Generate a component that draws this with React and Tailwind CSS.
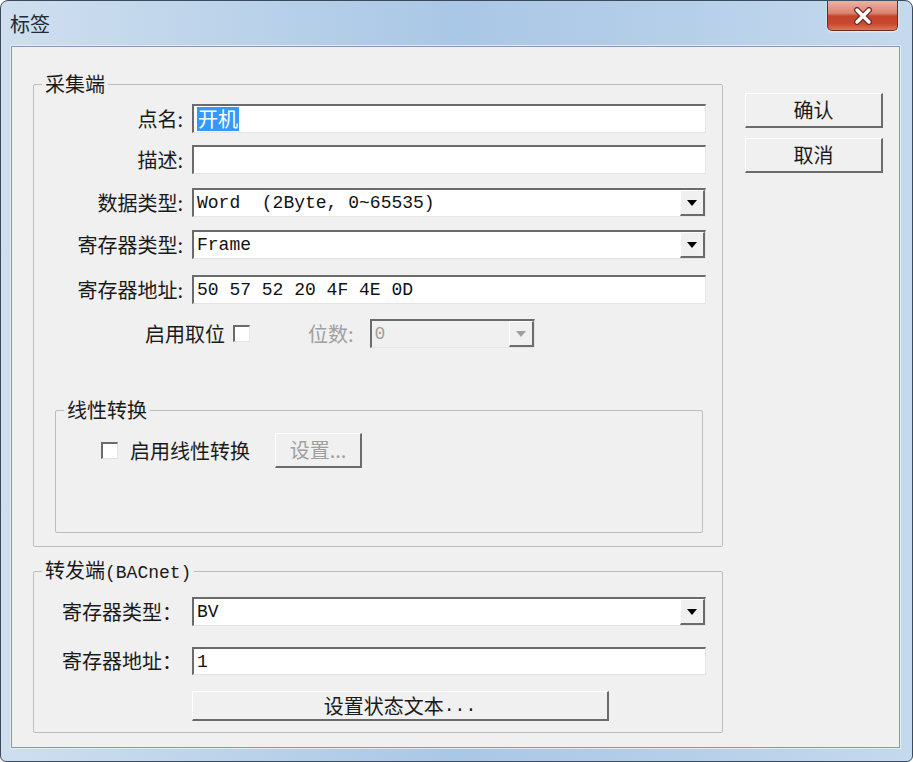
import React from 'react'

const CJK = "font-['Noto_Sans_CJK_SC',sans-serif]"
const MONO = "font-['Liberation_Mono','Noto_Sans_CJK_SC',monospace]"

// classic Win32 3D edges
const sunken = 'border-t-2 border-l-2 border-t-[#6b6b6b] border-l-[#6b6b6b] border-r border-b border-r-[#e4e4e4] border-b-[#e4e4e4]'
const raised = 'border-t border-l border-t-white border-l-white border-r-2 border-b-2 border-r-[#6b6b6b] border-b-[#6b6b6b]'

function Arrow({ disabled }) {
  return (
    <div className={`h-full w-[25px] bg-[#f0f0f0] flex items-center justify-center ${raised}`}>
      <svg width="10" height="6" viewBox="0 0 10 6">
        <path d="M0 0H10L5 6Z" fill={disabled ? '#a0a0a0' : '#000'} />
      </svg>
    </div>
  )
}

function Field({ children, combo, disabled, width = 'w-[514px]' }) {
  return (
    <div className={`h-full flex items-stretch ${disabled ? 'bg-[#f0f0f0]' : 'bg-white'} ${sunken} ${width}`}>
      <div className={`flex-1 flex items-center pl-[3px] text-[18px] leading-none ${MONO} ${disabled ? 'text-[#a0a0a0]' : 'text-[#111]'}`}>
        {children}
      </div>
      {combo && <Arrow disabled={disabled} />}
    </div>
  )
}

function Check() {
  return <div className={`w-[17px] h-[17px] bg-white ${sunken}`} />
}

function Group({ title, className, children }) {
  return (
    <fieldset className={`border border-[#bdbdbd] rounded-[2px] ${className}`}>
      <legend className={`ml-[8px] px-[3px] text-[20px] leading-[22px] text-[#1a1a1a] ${CJK}`}>{title}</legend>
      {children}
    </fieldset>
  )
}

function Row({ label, mt = '', children }) {
  return (
    <div className={`flex items-center h-[29px] ${mt}`}>
      <div className={`w-[149px] text-right text-[20px] leading-none text-[#1a1a1a] ${CJK}`}>{label}</div>
      <div className="ml-[9px] h-full">{children}</div>
    </div>
  )
}

function Btn({ children, className = '', disabled }) {
  return (
    <div className={`flex items-center justify-center bg-[#f0f0f0] text-[20px] leading-none ${CJK} ${raised} ${disabled ? 'text-[#a0a0a0]' : 'text-[#1a1a1a]'} ${className}`}>
      {children}
    </div>
  )
}

function CloseButton() {
  return (
    <div className="mr-[14px] w-[71px] h-[30px] rounded-b-[5px] border border-t-0 border-[#6e2b20] bg-[linear-gradient(180deg,#eab3a6_0%,#dc8370_42%,#c3432c_52%,#c9482f_78%,#df7657_100%)] flex items-center justify-center shadow-[0_1px_2px_rgba(255,255,255,0.7)]">
      <svg width="22" height="18" viewBox="0 0 22 18">
        <path d="M5 3L17 15M17 3L5 15" stroke="#6b2a1e" strokeWidth="6" strokeLinecap="round" />
        <path d="M5 3L17 15M17 3L5 15" stroke="#fff" strokeWidth="3.5" strokeLinecap="round" />
      </svg>
    </div>
  )
}

export default function App() {
  return (
    <div className="w-[913px] h-[762px] bg-white">
      <div className="w-full h-full rounded-t-[8px] rounded-b-[6px] border border-[#3a4b5e] bg-[linear-gradient(90deg,#cfdfef_0%,#bcd3ea_25%,#a9c7e6_50%,#b6cfe9_75%,#c5d9ee_100%)] flex flex-col">
        {/* Title bar */}
        <div className="h-[45px] flex justify-between">
          <div className={`self-center pl-[9px] pt-[1px] text-[20px] leading-none text-[#1e2a36] ${CJK}`}>标签</div>
          <CloseButton />
        </div>

        {/* Client area */}
        <div className="flex-1 ml-[10px] mr-[12px] mb-[13px] border border-[#8799b0] bg-[#f0f0f0] shadow-[0_0_0_1px_#e2ecf6] flex">
          <div className="flex flex-col pl-[21px] pt-[26px]">
            <Group title="采集端" className="w-[690px] h-[474px]">
              <div className="pt-[9px] flex flex-col">
                <Row label="点名:">
                  <Field>
                    <span className="bg-[#3399ff] text-white text-[20px] leading-[24px] font-['Noto_Sans_CJK_SC',sans-serif] px-[1px]">开机</span>
                  </Field>
                </Row>
                <Row label="描述:" mt="mt-[12px]">
                  <Field />
                </Row>
                <Row label="数据类型:" mt="mt-[14px]">
                  <Field combo>
                    <span className="whitespace-pre">Word  (2Byte, 0~65535)</span>
                  </Field>
                </Row>
                <Row label="寄存器类型:" mt="mt-[13px]">
                  <Field combo>Frame</Field>
                </Row>
                <Row label="寄存器地址:" mt="mt-[16px]">
                  <Field>50 57 52 20 4F 4E 0D</Field>
                </Row>

                <div className="mt-[15px] h-[29px] flex items-center">
                  <div className={`ml-[111px] text-[20px] leading-none text-[#1a1a1a] ${CJK}`}>启用取位</div>
                  <div className="ml-[8px]"><Check /></div>
                  <div className={`ml-[58px] text-[20px] leading-none text-[#a0a0a0] ${CJK}`}>位数:</div>
                  <div className="ml-[16px] h-full">
                    <Field combo disabled width="w-[165px]">0</Field>
                  </div>
                </div>

                <Group title="线性转换" className="mt-[51px] ml-[21px] w-[648px] h-[134px]">
                  <div className="mt-[12px] h-[35px] flex items-center">
                    <div className="ml-[45px]"><Check /></div>
                    <div className={`ml-[12px] text-[20px] leading-none text-[#1a1a1a] ${CJK}`}>启用线性转换</div>
                    <Btn disabled className="ml-[25px] w-[87px] h-full">设置...</Btn>
                  </div>
                </Group>
              </div>
            </Group>

            <Group
              title={<span>转发端<span className={`text-[18px] ${MONO}`}>(BACnet)</span></span>}
              className="mt-[12px] w-[690px] h-[174px]"
            >
              <div className="pt-[13px] flex flex-col">
                <div className="flex items-center h-[29px]">
                  <div className={`ml-[28px] w-[130px] text-[20px] leading-none text-[#1a1a1a] ${CJK}`}>寄存器类型：</div>
                  <div className="h-full"><Field combo>BV</Field></div>
                </div>
                <div className="mt-[21px] flex items-center h-[28px]">
                  <div className={`ml-[28px] w-[130px] text-[20px] leading-none text-[#1a1a1a] ${CJK}`}>寄存器地址：</div>
                  <div className="h-full"><Field>1</Field></div>
                </div>
                <div className="mt-[16px] ml-[158px]">
                  <Btn className="w-[417px] h-[30px]">
                    设置状态文本<span className={`text-[18px] ${MONO}`}>...</span>
                  </Btn>
                </div>
              </div>
            </Group>
          </div>

          <div className="ml-[22px] pt-[46px] flex flex-col gap-[10px]">
            <Btn className="w-[138px] h-[35px] border-t-[#8a8a8a]">确认</Btn>
            <Btn className="w-[138px] h-[35px]">取消</Btn>
          </div>
        </div>
      </div>
    </div>
  )
}
